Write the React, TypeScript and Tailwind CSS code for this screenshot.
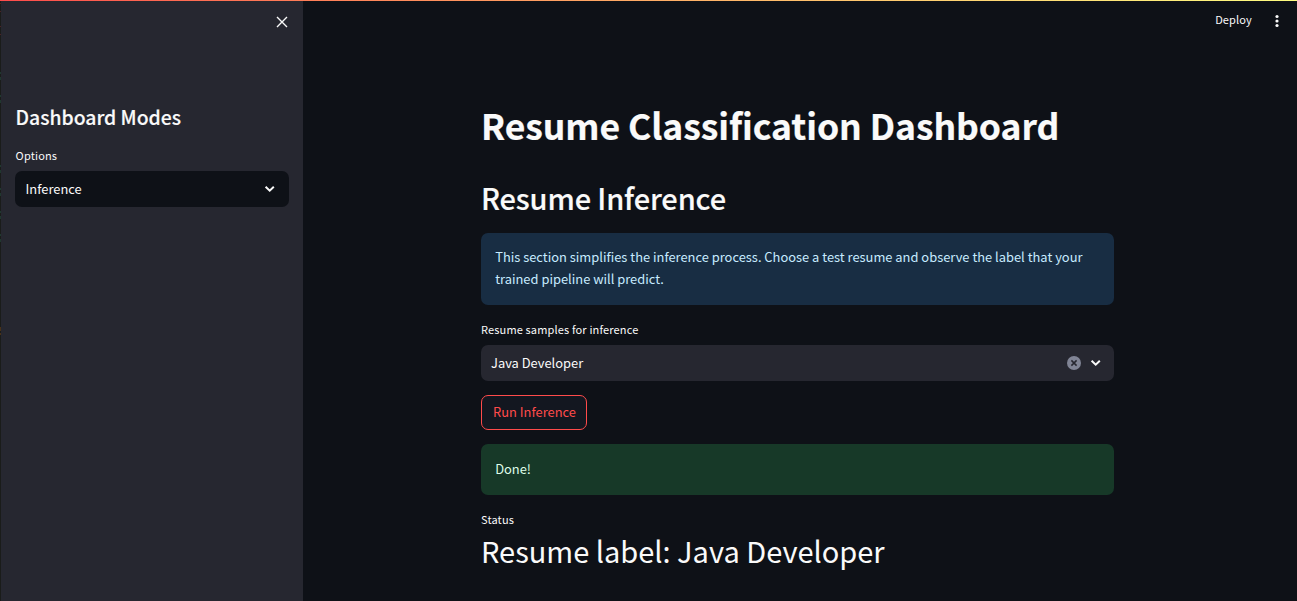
import React from "react";

const Chevron = () => (
  <svg viewBox="0 0 14 14" className="block h-[14px] w-[14px]" fill="none" stroke="#fafafa" strokeWidth="2">
    <path d="M2.6 4.8l4.1 3.9 4.1-3.9" />
  </svg>
);

const EdgeMarks = () => (
  <div className="flex w-px shrink-0 flex-col bg-[#1a1c1a]">
    <i className="mt-[2px] h-px bg-[#4b2226]" />
    <i className="mt-[7px] h-px bg-[#4b2226]" />
    <i className="mt-[14px] h-px bg-[#4b2226]" />
    <i className="mt-[7px] h-px bg-[#4b2226]" />
    <i className="mt-[37px] h-[2px] bg-[#20382f]" />
    <i className="mt-[3px] h-[3px] bg-[#20382f]" />
    <i className="mt-[15px] h-[2px] bg-[#20382f]" />
    <i className="mt-[3px] h-[3px] bg-[#20382f]" />
    <i className="mt-[62px] h-[2px] bg-[#20382f]" />
    <i className="mt-[3px] h-[3px] bg-[#20382f]" />
    <i className="mt-[15px] h-[2px] bg-[#20382f]" />
    <i className="mt-[3px] h-[3px] bg-[#20382f]" />
    <i className="mt-[15px] h-[2px] bg-[#20382f]" />
    <i className="mt-[3px] h-[3px] bg-[#20382f]" />
    <i className="mt-[15px] h-[2px] bg-[#20382f]" />
    <i className="mt-[3px] h-[3px] bg-[#20382f]" />
    <i className="mt-[85px] h-[4px] bg-[#4a3218]" />
    <i className="mt-[2px] h-[2px] bg-[#4a3218]" />
  </div>
);

export default function App() {
  return (
    <div className="flex h-[601px] w-[1297px] flex-col overflow-hidden bg-[#0e1117] font-['Noto_Sans_CJK_SC',sans-serif] text-[#fafafa]">
      <div className="h-px shrink-0 bg-linear-to-r from-[#ff4b4b] to-[#fffd80]" />
      <div className="flex min-h-0 flex-1">
        <EdgeMarks />
        <aside className="w-[302px] shrink-0 bg-[#262730] pr-[14px] pl-[14px]">
          <div className="flex justify-end pt-[15px] pr-px">
            <svg viewBox="0 0 12 12" className="h-3 w-3" fill="none" stroke="#fafafa" strokeWidth="1.4">
              <path d="M1 1l10 10M11 1L1 11" />
            </svg>
          </div>
          <h2 className="mt-[75px] pl-[0.6px] text-[19.4px] leading-7 font-medium tracking-[-0.03px] whitespace-nowrap [-webkit-text-stroke:0.15px_#fafafa]">
            Dashboard Modes
          </h2>
          <div className="mt-[14px] pl-[0.6px] text-[11px] leading-5 tracking-[0.15px]">Options</div>
          <div className="mt-[6px] flex h-9 items-center justify-between rounded-[7px] bg-[#0e1117] pr-[12px] pl-[10.6px] text-[12.9px] leading-5">
            <span>Inference</span>
            <Chevron />
          </div>
        </aside>
        <main className="min-w-0 flex-1">
          <header className="flex h-[39px] items-center justify-end pr-[17px]">
            <span className="mr-[22px] -mt-[4px] text-[11px] leading-5 tracking-[0.15px]">Deploy</span>
            <svg viewBox="0 0 6 14" className="h-[14px] w-[6px]" fill="#fafafa">
              <circle cx="3" cy="2.5" r="1.6" />
              <circle cx="3" cy="7" r="1.6" />
              <circle cx="3" cy="11.5" r="1.6" />
            </svg>
          </header>
          <div className="ml-[178px] w-[633px]">
            <h1 className="pt-[61px] text-[35.5px] leading-12 font-bold tracking-[-0.07px] whitespace-nowrap [-webkit-text-stroke:0.2px_#fafafa]">
              Resume Classification Dashboard
            </h1>
            <h2 className="mt-[28px] text-[29px] leading-10 font-medium tracking-[-0.14px] whitespace-nowrap [-webkit-text-stroke:0.15px_#fafafa]">
              Resume Inference
            </h2>
            <div className="mt-[16px] h-[72px] rounded-[7px] bg-[#182d43] px-[14.2px] pt-[13px] text-[12.9px] leading-[22px] whitespace-nowrap text-[#c7ebff]">
              This section simplifies the inference process. Choose a test resume and observe the label that your
              <br />
              trained pipeline will predict.
            </div>
            <div className="mt-[14px] text-[11px] leading-5 tracking-[0.15px]">Resume samples for inference</div>
            <div className="mt-[6px] flex h-9 items-center rounded-[7px] bg-[#262730] pr-[11px] pl-[10px] text-[12.9px] leading-5">
              <span className="flex-1">Java Developer</span>
              <svg viewBox="0 0 14 14" className="mr-[8px] h-[14px] w-[14px]">
                <circle cx="7" cy="7" r="7" fill="#808495" />
                <path d="M4.4 4.4l5.2 5.2M9.6 4.4L4.4 9.6" stroke="#262730" strokeWidth="1.5" />
              </svg>
              <Chevron />
            </div>
            <button className="mt-[14px] flex h-[35px] w-[106px] items-center justify-center rounded-[7px] border border-[#ff4b4b] bg-[#131720] pb-px pl-px text-[12.9px] leading-5 whitespace-nowrap text-[#ff4b4b]">
              Run Inference
            </button>
            <div className="mt-[14px] h-[51px] rounded-[7px] bg-[#173928] px-[14.2px] pt-[14px] text-[12.9px] leading-[22px] text-[#dffde9]">Done!</div>
            <div className="mt-[14px] text-[11px] leading-5 tracking-[0.15px]">Status</div>
            <div className="mt-px text-[29px] leading-10 whitespace-nowrap">Resume label: Java Developer</div>
          </div>
        </main>
      </div>
    </div>
  );
}
